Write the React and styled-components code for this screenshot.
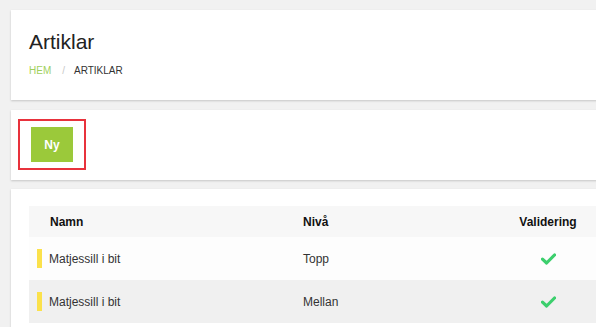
import React from "react";
import styled, { createGlobalStyle } from "styled-components";

const Global = createGlobalStyle`
  html, body { margin: 0; padding: 0; background: #f1f1f1; overflow: hidden; }
  body { font-family: "Liberation Sans", Arial, sans-serif; }
`;

const Page = styled.div`
  display: flex;
  flex-direction: column;
  gap: 10px;
  padding: 10px 0 0 11px;
  width: 640px;
`;

const Card = styled.section`
  background: #fff;
  box-shadow: 0 1px 2px rgba(0, 0, 0, 0.18);
  padding: ${(p) => p.$pad};
  margin-top: ${(p) => p.$mt || "0"};
`;

const Title = styled.h1`
  margin: 0;
  font-size: 21px;
  font-weight: normal;
  color: #222;
  line-height: 24px;
`;

const Crumbs = styled.div`
  display: flex;
  margin-top: 11px;
  font-size: 10px;
  line-height: 12px;
  text-transform: uppercase;
`;

const Crumb = styled.span`
  color: ${(p) => (p.$active ? "#9fd05c" : "#333")};
`;

const Sep = styled.span`
  color: #c8c8c8;
  padding: 0 9px 0 11px;
`;

const Highlight = styled.div`
  display: inline-flex;
  border: 2px solid #e8323c;
  padding: 6px 11px;
`;

const Button = styled.button`
  width: 42px;
  height: 35px;
  border: none;
  background: #9bc93a;
  color: #fff;
  font-family: inherit;
  font-weight: bold;
  font-size: 12px;
  padding: 0;
`;

const Row = styled.div`
  display: grid;
  grid-template-columns: 262px 219px 76px 1fr;
  align-items: center;
  height: ${(p) => (p.$head ? "31px" : "43px")};
  background: ${(p) => p.$bg};
  font-size: 12px;
  color: ${(p) => (p.$head ? "#111" : "#333")};
  font-weight: ${(p) => (p.$head ? "bold" : "normal")};
`;

const Cell = styled.div`
  display: flex;
  align-items: center;
  justify-content: ${(p) => (p.$center ? "center" : "flex-start")};
  padding-left: ${(p) => p.$pl || "0"};
`;

const Marker = styled.span`
  width: 5px;
  height: 19px;
  background: #fbe14b;
  margin-right: 7px;
`;

const Check = () => (
  <svg width="15" height="12" viewBox="0 0 15 12">
    <path d="M1.5 6.2 L5.6 10 L13.5 2" fill="none" stroke="#3ccf6d" strokeWidth="3.2" strokeLinecap="round" strokeLinejoin="round" />
  </svg>
);

const rows = [
  { name: "Matjessill i bit", level: "Topp", bg: "#fdfdfd" },
  { name: "Matjessill i bit", level: "Mellan", bg: "#f0f0f0" },
];

export default function App() {
  return (
    <>
      <Global />
      <Page>
        <Card $pad="20px 18px 23px 18px">
          <Title>Artiklar</Title>
          <Crumbs>
            <Crumb $active>Hem</Crumb>
            <Sep>/</Sep>
            <Crumb>Artiklar</Crumb>
          </Crumbs>
        </Card>
        <Card $pad="9px 7px 10px 7px">
          <Highlight>
            <Button>Ny</Button>
          </Highlight>
        </Card>
        <Card $pad="17px 0 20px 18px" $mt="-1px">
          <Row $head $bg="#f7f7f7">
            <Cell $pl="21px">Namn</Cell>
            <Cell $pl="12px">Nivå</Cell>
            <Cell $center>Validering</Cell>
            <Cell />
          </Row>
          {rows.map((r, i) => (
            <Row key={i} $bg={r.bg}>
              <Cell $pl="8px">
                <Marker />
                {r.name}
              </Cell>
              <Cell $pl="12px">{r.level}</Cell>
              <Cell $center>
                <Check />
              </Cell>
              <Cell />
            </Row>
          ))}
        </Card>
      </Page>
    </>
  );
}
